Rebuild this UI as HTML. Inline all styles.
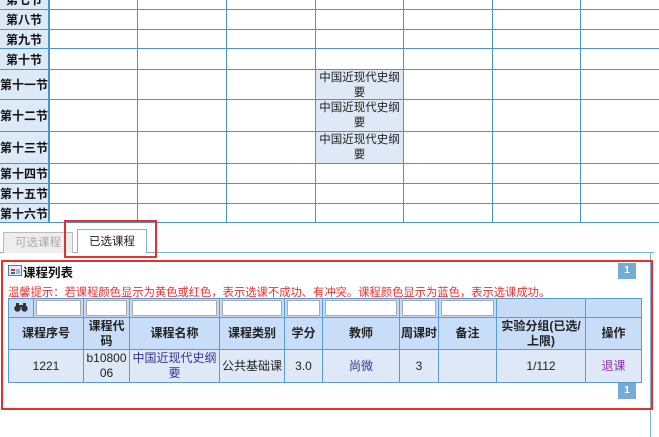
<!DOCTYPE html>
<html><head><meta charset="utf-8"><style>
*{margin:0;padding:0;box-sizing:border-box}
body{width:659px;height:437px;overflow:hidden;background:#fff;position:relative;font-family:"Liberation Sans","Noto Sans CJK SC",sans-serif;font-size:12px;color:#222}
.a{position:absolute}
.h{position:absolute;left:0;width:659px;height:1px;background:#4d94cc}
.v{position:absolute;top:-10px;height:233px;width:1px;background:#4d94cc}
.lb{position:absolute;left:0;width:48px;background:#dce9f7;font-weight:bold;font-size:12px;display:flex;align-items:center;justify-content:center;color:#111}
.cc{position:absolute;left:316px;width:87px;background:#dfe8f6;font-size:11.5px;text-align:center;line-height:15px;padding-top:1px;color:#222}
table{border-collapse:collapse;position:absolute;left:8px;top:298px;width:633px;table-layout:fixed}
td{border:1px solid #5b9bd3;text-align:center;font-size:12px;line-height:15px}
.f td{height:19px;background:#c6dcf6;padding:1px 2px}
.f input{display:block;width:100%;height:16px;border:1px solid #aaa;background:#fff}
.hd td{height:32px;background:#c8ddf8;font-weight:bold;color:#222}
.dr td{height:33px;background:#dfe8f6}
.pg{position:absolute;width:18px;height:16px;background:#75acd6;color:#fff;font-size:10px;font-weight:bold;text-align:center;line-height:16px}
</style></head><body>
<div class="lb" style="top:-10px;height:19px">第七节</div>
<div class="lb" style="top:10px;height:19px">第八节</div>
<div class="lb" style="top:30px;height:18px">第九节</div>
<div class="lb" style="top:49px;height:20px">第十节</div>
<div class="lb" style="top:70px;height:29px">第十一节</div>
<div class="lb" style="top:100px;height:31px">第十二节</div>
<div class="lb" style="top:132px;height:31px">第十三节</div>
<div class="lb" style="top:164px;height:19px">第十四节</div>
<div class="lb" style="top:184px;height:19px">第十五节</div>
<div class="lb" style="top:204px;height:18px">第十六节</div>
<div class="cc" style="top:70px;height:29px">中国近现代史纲<br>要</div>
<div class="cc" style="top:100px;height:31px">中国近现代史纲<br>要</div>
<div class="cc" style="top:132px;height:31px">中国近现代史纲<br>要</div>
<div class="h" style="top:9px"></div><div class="h" style="top:29px"></div><div class="h" style="top:48px"></div><div class="h" style="top:69px"></div><div class="h" style="top:99px"></div><div class="h" style="top:131px"></div><div class="h" style="top:163px"></div><div class="h" style="top:183px"></div><div class="h" style="top:203px"></div><div class="h" style="top:222px"></div>
<div class="v" style="left:48px;width:2px"></div><div class="v" style="left:137px"></div><div class="v" style="left:226px"></div><div class="v" style="left:315px"></div><div class="v" style="left:403px"></div><div class="v" style="left:492px"></div><div class="v" style="left:580px"></div>
<div class="a" style="left:0;top:252px;width:654px;height:1px;background:#7fb2da"></div>
<div class="a" style="left:650px;top:252px;width:1px;height:185px;background:#7fb2da"></div>
<div class="a" style="left:3px;top:232px;width:70px;height:21px;background:#eee;border:1px solid #bbb;border-bottom:none;color:#aaa;text-align:center;line-height:20px;font-size:11.5px">可选课程</div>
<div class="a" style="left:77px;top:229px;width:70px;height:24px;background:#fff;border:1px solid #7fb2da;border-bottom:none;color:#222;text-align:center;line-height:24px;font-size:11.5px">已选课程</div>
<div class="a" style="left:64px;top:220px;width:93px;height:38px;border:2px solid #e53030"></div>
<div class="a" style="left:8px;top:265px;width:14px;height:11px;border:1px solid #5577aa;background:#e8eef8"><div class="a" style="left:2px;top:3px;width:4px;height:2px;background:#c33"></div><div class="a" style="left:2px;top:6px;width:4px;height:2px;background:#36a"></div><div class="a" style="left:7px;top:3px;width:4px;height:5px;background:#9bd"></div></div>
<div class="a" style="left:23px;top:262px;font-weight:bold;font-size:12.5px;color:#111">课程列表</div>
<div class="pg" style="left:618px;top:263px">1</div>
<div class="a" style="left:8px;top:284px;color:#f03030;font-size:11.3px;white-space:nowrap">温馨提示：若课程颜色显示为黄色或红色，表示选课不成功、有冲突。课程颜色显示为蓝色，表示选课成功。</div>
<table>
<colgroup><col style="width:25px"><col style="width:50px"><col style="width:46px"><col style="width:90px"><col style="width:65px"><col style="width:38px"><col style="width:77px"><col style="width:39px"><col style="width:58px"><col style="width:89px"><col style="width:56px"></colgroup>
<tr class="f"><td><svg width="14" height="10" viewBox="0 0 14 10"><circle cx="3.5" cy="6.5" r="3.2" fill="#333"/><circle cx="10.5" cy="6.5" r="3.2" fill="#333"/><rect x="2" y="1" width="3" height="4" fill="#333"/><rect x="9" y="1" width="3" height="4" fill="#333"/><rect x="5" y="3" width="4" height="2" fill="#333"/></svg></td><td><input></td><td><input></td><td><input></td><td><input></td><td><input></td><td><input></td><td><input></td><td><input></td><td></td><td></td></tr>
<tr class="hd"><td colspan="2">课程序号</td><td>课程代码</td><td>课程名称</td><td>课程类别</td><td>学分</td><td>教师</td><td>周课时</td><td>备注</td><td>实验分组(已选/上限)</td><td>操作</td></tr>
<tr class="dr"><td colspan="2">1221</td><td>b10800<br>06</td><td style="color:#333399">中国近现代史纲<br>要</td><td>公共基础课</td><td>3.0</td><td style="color:#333399">尚微</td><td>3</td><td></td><td>1/112</td><td style="color:#8833aa">退课</td></tr>
</table>
<div class="pg" style="left:618px;top:383px">1</div>
<div class="a" style="left:1px;top:260px;width:652px;height:150px;border:2px solid #e53030"></div>
</body></html>
